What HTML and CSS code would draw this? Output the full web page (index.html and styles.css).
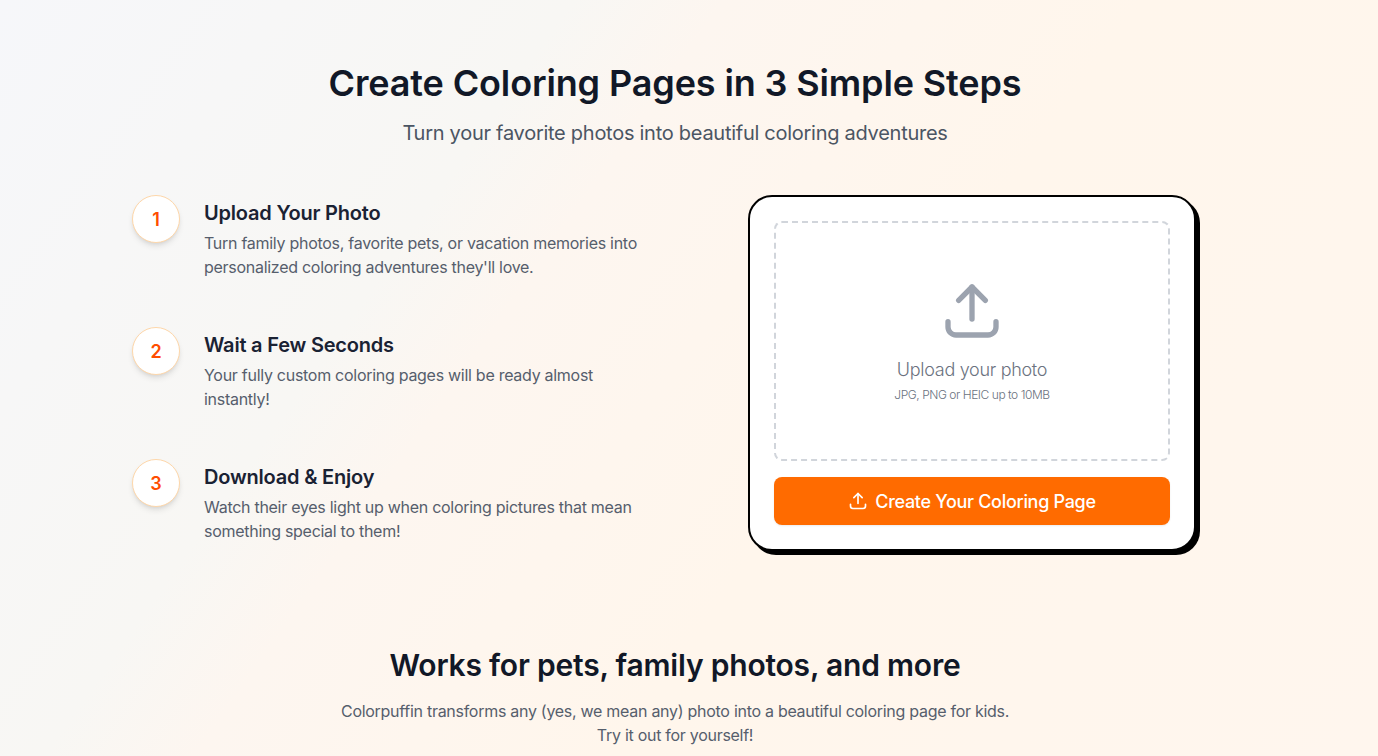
FILE: index.html
```html
<!DOCTYPE html>
<html lang="en">
<head>
<meta charset="utf-8">
<title>Colorpuffin</title>
<link rel="stylesheet" href="styles.css">
</head>
<body>
<main class="page">
  <header class="intro">
    <h1 class="intro-title">Create Coloring Pages in 3 Simple Steps</h1>
    <p class="intro-sub">Turn your favorite photos into beautiful coloring adventures</p>
  </header>
  <section class="columns">
    <ol class="steps">
      <li class="step">
        <span class="step-num">1</span>
        <div class="step-body">
          <h3 class="step-title">Upload Your Photo</h3>
          <p class="step-text">Turn family photos, favorite pets, or vacation memories into personalized coloring adventures they'll love.</p>
        </div>
      </li>
      <li class="step">
        <span class="step-num">2</span>
        <div class="step-body">
          <h3 class="step-title">Wait a Few Seconds</h3>
          <p class="step-text">Your fully custom coloring pages will be ready almost instantly!</p>
        </div>
      </li>
      <li class="step">
        <span class="step-num">3</span>
        <div class="step-body">
          <h3 class="step-title">Download &amp; Enjoy</h3>
          <p class="step-text">Watch their eyes light up when coloring pictures that mean something special to them!</p>
        </div>
      </li>
    </ol>
    <div class="card-col">
      <div class="card">
        <div class="drop">
          <svg class="drop-icon" viewBox="0 0 24 24" fill="none" stroke="currentColor" stroke-width="2" stroke-linecap="round" stroke-linejoin="round"><path d="M3 16v2a3 3 0 0 0 3 3h12a3 3 0 0 0 3-3v-2"/><path d="M7 8l5-5 5 5"/><path d="M12 3v12"/></svg>
          <p class="drop-title">Upload your photo</p>
          <p class="drop-note">JPG, PNG or HEIC up to 10MB</p>
        </div>
        <button class="cta" type="button">
          <svg class="cta-icon" viewBox="0 0 24 24" fill="none" stroke="currentColor" stroke-width="2" stroke-linecap="round" stroke-linejoin="round"><path d="M3 16v2a3 3 0 0 0 3 3h12a3 3 0 0 0 3-3v-2"/><path d="M7 8l5-5 5 5"/><path d="M12 3v12"/></svg>
          <span class="cta-label">Create Your Coloring Page</span>
        </button>
      </div>
    </div>
  </section>
  <section class="more">
    <h2 class="more-title">Works for pets, family photos, and more</h2>
    <p class="more-text">Colorpuffin transforms any (yes, we mean any) photo into a beautiful coloring page for kids.<br>Try it out for yourself!</p>
  </section>
</main>
</body>
</html>
```

FILE: styles.css
```css
* { box-sizing: border-box; }
html, body { margin: 0; padding: 0; height: 756px; overflow: hidden; }
body {
  font-family: Inter, "Noto Sans", sans-serif;
  background: linear-gradient(125deg, #f6f7fa 0%, #f8f7f4 30%, #fdf6f0 38%, #fff6ec 60%, #fff6ee 100%);
  color: #111827;
}
h1, h2, h3, p, ol { margin: 0; padding: 0; }
.page { width: 1350px; padding: 63px 132px 0; }
.intro { text-align: center; }
.intro-title { font-size: 36px; line-height: 40px; font-weight: 600; letter-spacing: -0.13px; color: #111827; }
.intro-sub { margin-top: 14px; font-size: 20px; line-height: 32px; font-weight: 400; letter-spacing: -0.27px; color: #4b5563; }
.columns { display: grid; grid-template-columns: 512px 1fr; margin-top: 46px; }
.steps { list-style: none; display: flex; flex-direction: column; gap: 52px; }
.step { display: flex; gap: 24px; height: 80px; }
.step-num {
  flex: none; width: 48px; height: 48px; border-radius: 50%;
  background: #fff; border: 1px solid #fed7aa;
  box-shadow: 0 4px 6px -1px rgba(0,0,0,.1), 0 2px 4px -2px rgba(0,0,0,.1);
  display: flex; align-items: center; justify-content: center;
  font-size: 18px; font-weight: 600; color: #ff4d00;
}
.step-body { padding-top: 4px; width: 440px; }
.step-title { font-size: 20px; line-height: 28px; font-weight: 600; letter-spacing: -0.2px; color: #1a2233; }
.step-text { margin-top: 4px; font-size: 16px; line-height: 24px; letter-spacing: -0.28px; color: #565e6c; }
.card-col { display: flex; justify-content: center; align-items: flex-start; padding-left: 82px; }
.card {
  width: 448px; height: 356px; padding: 24px; background: #fff;
  border: 2px solid #000; border-radius: 24px; box-shadow: 4px 4px 0 #000;
  display: flex; flex-direction: column; gap: 16px;
}
.drop {
  height: 240px; border: 2px dashed #d1d5db; border-radius: 8px;
  display: flex; flex-direction: column; align-items: center; padding-top: 56px;
}
.drop-icon { width: 64px; height: 64px; color: #9ca3af; }
.drop-title { margin-top: 13px; font-size: 18px; line-height: 28px; font-weight: 300; letter-spacing: -0.3px; color: #6b7280; }
.drop-note { margin-top: 3px; font-size: 12px; line-height: 16px; font-weight: 300; letter-spacing: -0.45px; color: #6b7280; }
.cta {
  height: 48px; border: 0; border-radius: 8px; background: #ff6b00; color: #fff;
  display: flex; align-items: center; justify-content: center; gap: 7px;
  font: 500 18px/28px Inter, "Noto Sans", sans-serif; letter-spacing: -0.3px;
  box-shadow: 0 1px 2px rgba(0,0,0,.08);
}
.cta-icon { width: 20px; height: 20px; }
.cta-label { padding-top: 2px; }
.more { margin-top: 96px; text-align: center; }
.more-title { font-size: 30px; line-height: 36px; font-weight: 600; letter-spacing: -0.2px; color: #111827; }
.more-text { margin-top: 16px; font-size: 16px; line-height: 24px; letter-spacing: -0.28px; color: #565e6c; }
```
